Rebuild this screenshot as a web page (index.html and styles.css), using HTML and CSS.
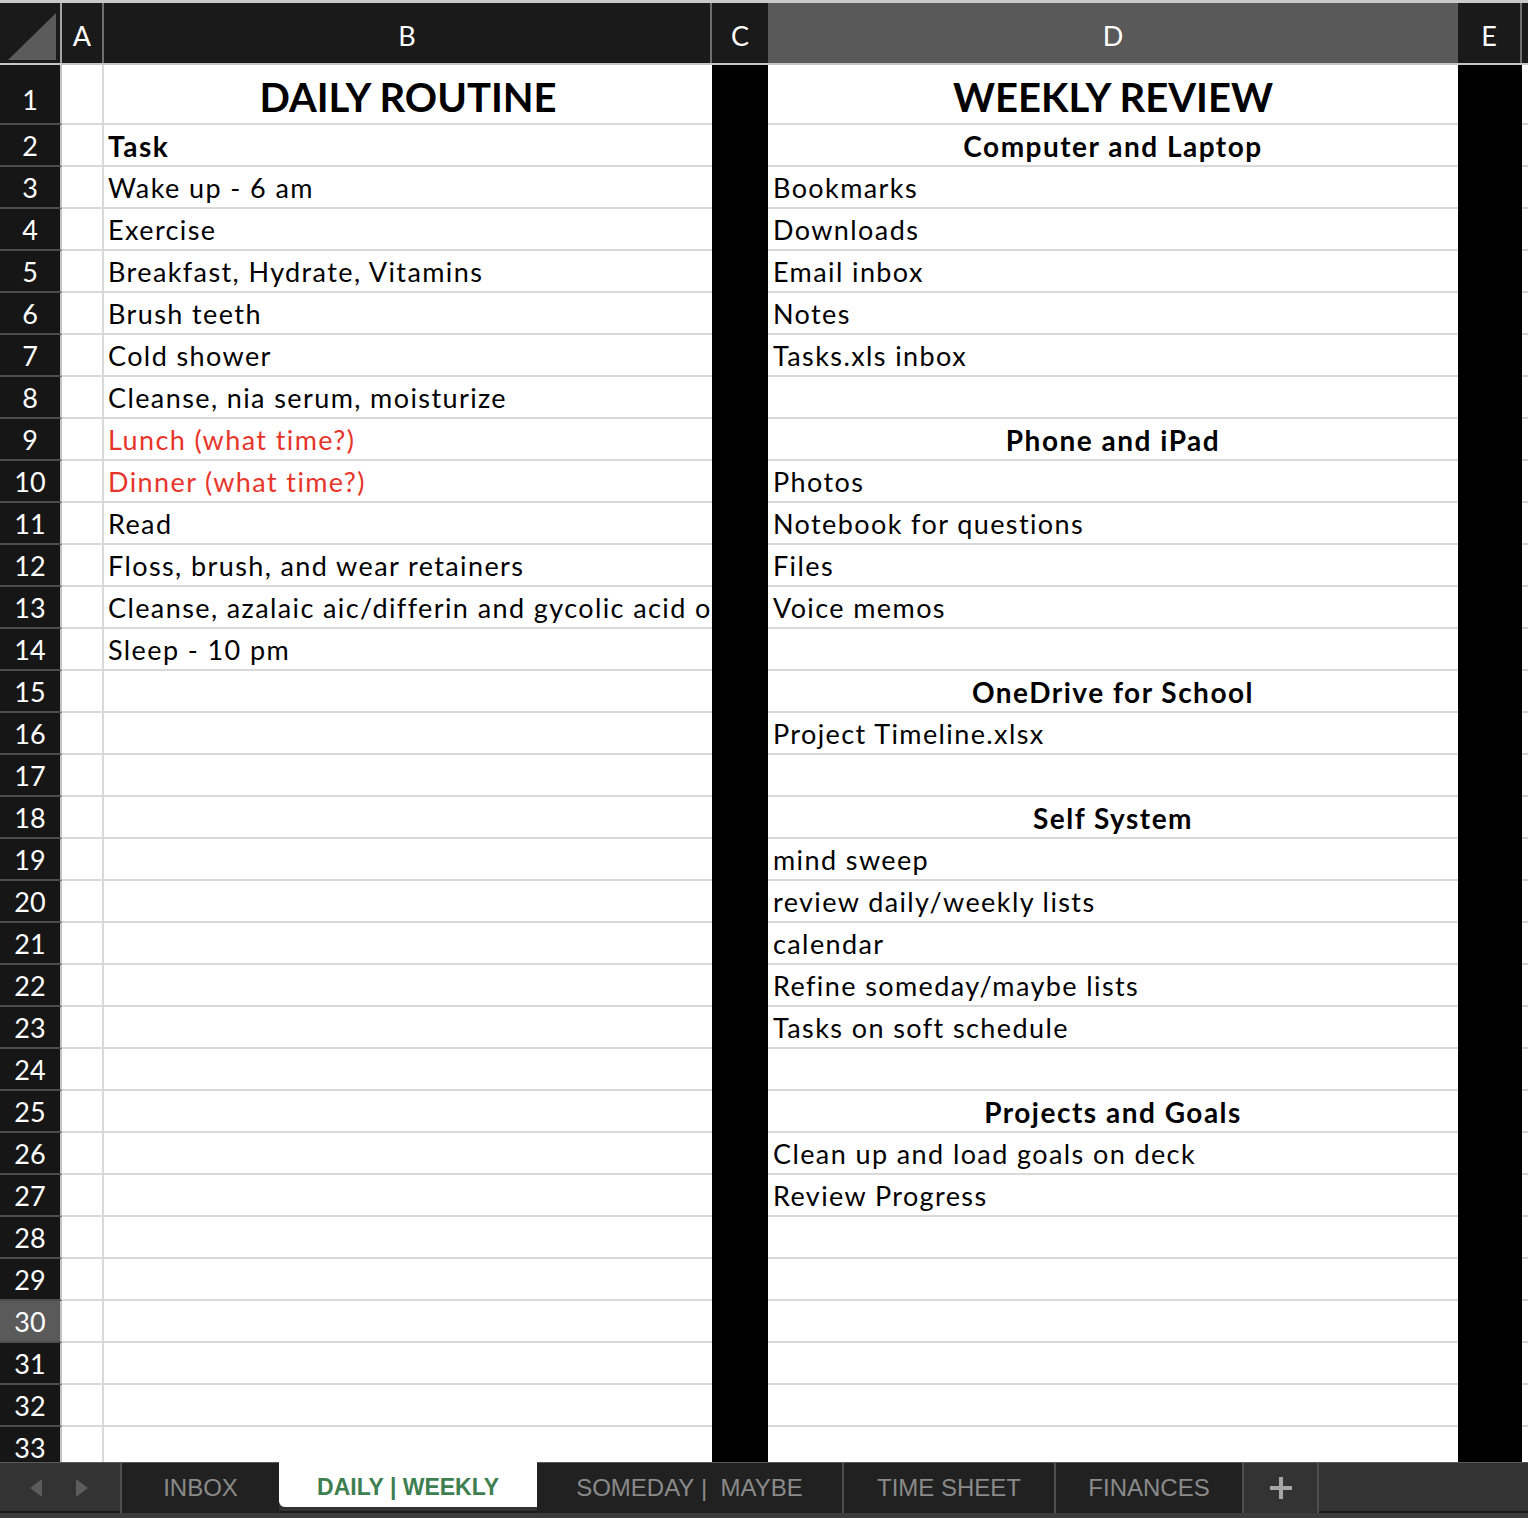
FILE: index.html
```html
<!DOCTYPE html>
<html>
<head>
<meta charset="utf-8">
<link rel="stylesheet" href="styles.css">
</head>
<body>
<div class="app">
  <div class="colhead">
    <div class="hc corner"><svg width="60" height="60" viewBox="0 0 60 60"><polygon points="8,57 56,10 56,57" fill="#5b5b5b"/></svg></div>
    <div class="hc ha">A</div>
    <div class="hc hb">B</div>
    <div class="hc hcc">C</div>
    <div class="hc hd">D</div>
    <div class="hc he">E</div>
    <div class="hc hz"></div>
  </div>
  <div class="grid">
    <div class="row first"><div class="rh">1</div><div class="c a"></div><div class="c b title">DAILY ROUTINE</div><div class="k"></div><div class="c d title">WEEKLY REVIEW</div><div class="k"></div><div class="c z"></div></div>
    <div class="row"><div class="rh">2</div><div class="c a"></div><div class="c b bold">Task</div><div class="k"></div><div class="c d sec">Computer and Laptop</div><div class="k"></div><div class="c z"></div></div>
    <div class="row"><div class="rh">3</div><div class="c a"></div><div class="c b">Wake up - 6 am</div><div class="k"></div><div class="c d">Bookmarks</div><div class="k"></div><div class="c z"></div></div>
    <div class="row"><div class="rh">4</div><div class="c a"></div><div class="c b">Exercise</div><div class="k"></div><div class="c d">Downloads</div><div class="k"></div><div class="c z"></div></div>
    <div class="row"><div class="rh">5</div><div class="c a"></div><div class="c b">Breakfast, Hydrate, Vitamins</div><div class="k"></div><div class="c d">Email inbox</div><div class="k"></div><div class="c z"></div></div>
    <div class="row"><div class="rh">6</div><div class="c a"></div><div class="c b">Brush teeth</div><div class="k"></div><div class="c d">Notes</div><div class="k"></div><div class="c z"></div></div>
    <div class="row"><div class="rh">7</div><div class="c a"></div><div class="c b">Cold shower</div><div class="k"></div><div class="c d">Tasks.xls inbox</div><div class="k"></div><div class="c z"></div></div>
    <div class="row"><div class="rh">8</div><div class="c a"></div><div class="c b">Cleanse, nia serum, moisturize</div><div class="k"></div><div class="c d"></div><div class="k"></div><div class="c z"></div></div>
    <div class="row"><div class="rh">9</div><div class="c a"></div><div class="c b red">Lunch (what time?)</div><div class="k"></div><div class="c d sec">Phone and iPad</div><div class="k"></div><div class="c z"></div></div>
    <div class="row"><div class="rh">10</div><div class="c a"></div><div class="c b red">Dinner (what time?)</div><div class="k"></div><div class="c d">Photos</div><div class="k"></div><div class="c z"></div></div>
    <div class="row"><div class="rh">11</div><div class="c a"></div><div class="c b">Read</div><div class="k"></div><div class="c d">Notebook for questions</div><div class="k"></div><div class="c z"></div></div>
    <div class="row"><div class="rh">12</div><div class="c a"></div><div class="c b">Floss, brush, and wear retainers</div><div class="k"></div><div class="c d">Files</div><div class="k"></div><div class="c z"></div></div>
    <div class="row"><div class="rh">13</div><div class="c a"></div><div class="c b">Cleanse, azalaic aic/differin and gycolic acid o</div><div class="k"></div><div class="c d">Voice memos</div><div class="k"></div><div class="c z"></div></div>
    <div class="row"><div class="rh">14</div><div class="c a"></div><div class="c b">Sleep - 10 pm</div><div class="k"></div><div class="c d"></div><div class="k"></div><div class="c z"></div></div>
    <div class="row"><div class="rh">15</div><div class="c a"></div><div class="c b"></div><div class="k"></div><div class="c d sec">OneDrive for School</div><div class="k"></div><div class="c z"></div></div>
    <div class="row"><div class="rh">16</div><div class="c a"></div><div class="c b"></div><div class="k"></div><div class="c d">Project Timeline.xlsx</div><div class="k"></div><div class="c z"></div></div>
    <div class="row"><div class="rh">17</div><div class="c a"></div><div class="c b"></div><div class="k"></div><div class="c d"></div><div class="k"></div><div class="c z"></div></div>
    <div class="row"><div class="rh">18</div><div class="c a"></div><div class="c b"></div><div class="k"></div><div class="c d sec">Self System</div><div class="k"></div><div class="c z"></div></div>
    <div class="row"><div class="rh">19</div><div class="c a"></div><div class="c b"></div><div class="k"></div><div class="c d">mind sweep</div><div class="k"></div><div class="c z"></div></div>
    <div class="row"><div class="rh">20</div><div class="c a"></div><div class="c b"></div><div class="k"></div><div class="c d">review daily/weekly lists</div><div class="k"></div><div class="c z"></div></div>
    <div class="row"><div class="rh">21</div><div class="c a"></div><div class="c b"></div><div class="k"></div><div class="c d">calendar</div><div class="k"></div><div class="c z"></div></div>
    <div class="row"><div class="rh">22</div><div class="c a"></div><div class="c b"></div><div class="k"></div><div class="c d">Refine someday/maybe lists</div><div class="k"></div><div class="c z"></div></div>
    <div class="row"><div class="rh">23</div><div class="c a"></div><div class="c b"></div><div class="k"></div><div class="c d">Tasks on soft schedule</div><div class="k"></div><div class="c z"></div></div>
    <div class="row"><div class="rh">24</div><div class="c a"></div><div class="c b"></div><div class="k"></div><div class="c d"></div><div class="k"></div><div class="c z"></div></div>
    <div class="row"><div class="rh">25</div><div class="c a"></div><div class="c b"></div><div class="k"></div><div class="c d sec">Projects and Goals</div><div class="k"></div><div class="c z"></div></div>
    <div class="row"><div class="rh">26</div><div class="c a"></div><div class="c b"></div><div class="k"></div><div class="c d">Clean up and load goals on deck</div><div class="k"></div><div class="c z"></div></div>
    <div class="row"><div class="rh">27</div><div class="c a"></div><div class="c b"></div><div class="k"></div><div class="c d">Review Progress</div><div class="k"></div><div class="c z"></div></div>
    <div class="row"><div class="rh">28</div><div class="c a"></div><div class="c b"></div><div class="k"></div><div class="c d"></div><div class="k"></div><div class="c z"></div></div>
    <div class="row"><div class="rh">29</div><div class="c a"></div><div class="c b"></div><div class="k"></div><div class="c d"></div><div class="k"></div><div class="c z"></div></div>
    <div class="row"><div class="rh sel">30</div><div class="c a"></div><div class="c b"></div><div class="k"></div><div class="c d"></div><div class="k"></div><div class="c z"></div></div>
    <div class="row"><div class="rh">31</div><div class="c a"></div><div class="c b"></div><div class="k"></div><div class="c d"></div><div class="k"></div><div class="c z"></div></div>
    <div class="row"><div class="rh">32</div><div class="c a"></div><div class="c b"></div><div class="k"></div><div class="c d"></div><div class="k"></div><div class="c z"></div></div>
    <div class="row"><div class="rh">33</div><div class="c a"></div><div class="c b"></div><div class="k"></div><div class="c d"></div><div class="k"></div><div class="c z"></div></div>
  </div>
  <div class="tabbar">
    <div class="nav">
      <svg width="14" height="18" viewBox="0 0 14 18"><polygon points="13,0 13,18 1,9" fill="#5c5c5c"/></svg>
      <svg width="14" height="18" viewBox="0 0 14 18"><polygon points="1,0 1,18 13,9" fill="#5c5c5c"/></svg>
    </div>
    <div class="tab t-inbox">INBOX</div>
    <div class="tab active t-daily">DAILY | WEEKLY</div>
    <div class="tab t-some">SOMEDAY&nbsp;|&nbsp; MAYBE</div>
    <div class="tab t-time">TIME SHEET</div>
    <div class="tab t-fin">FINANCES</div>
    <div class="tab plus"><svg width="22" height="22" viewBox="0 0 22 22"><rect x="9" y="0" width="4" height="22" fill="#a6a6a6"/><rect x="0" y="9" width="22" height="4" fill="#a6a6a6"/></svg></div>
    <div class="rest"></div>
  </div>
</div>
</body>
</html>
```

FILE: styles.css
```css
html, body {
  margin: 0;
  padding: 0;
  background: #ffffff;
}
.app {
  width: 1528px;
  height: 1518px;
  overflow: hidden;
  font-family: Lato, "Open Sans", sans-serif;
  display: flex;
  flex-direction: column;
}
.colhead {
  display: grid;
  grid-template-columns: 62px 42px 608px 56px 690px 64px 6px;
  height: 65px;
  box-sizing: border-box;
  border-top: 3px solid #c9c9c9;
  border-bottom: 2px solid #c6c6c6;
  background: #1a1a1a;
  flex: none;
}
.hc {
  color: #ffffff;
  font-size: 27px;
  display: flex;
  align-items: center;
  justify-content: center;
  box-sizing: border-box;
  background: #1a1a1a;
  padding-top: 4px;
}
.corner { border-right: 2px solid #a3a3a3; align-items: flex-end; justify-content: flex-start; padding-top: 0; }
.corner svg { display: block; }
.ha { border-right: 2px solid #6e6e6e; }
.hb { border-right: 2px solid #6e6e6e; }
.hd { background: #595959; }
.he { border-right: 2px solid #6e6e6e; }
.grid {
  height: 1397px;
  overflow: hidden;
  flex: none;
}
.row {
  display: grid;
  grid-template-columns: 62px 42px 608px 56px 690px 64px 6px;
  height: 42px;
}
.row.first { height: 60px; }
.rh {
  background: #161616;
  color: #ffffff;
  font-size: 27px;
  display: flex;
  align-items: center;
  justify-content: center;
  box-sizing: border-box;
  border-right: 2px solid #c3c3c3;
  border-bottom: 2px solid #4d4d4d;
  padding-top: 1px;
}
.first .rh { padding-top: 11px; }
.rh.sel { background: #5a5a5a; }
.c {
  box-sizing: border-box;
  border-bottom: 2px solid #d9d9d9;
  font-size: 27px;
  letter-spacing: 1.4px;
  color: #000000;
  display: flex;
  align-items: center;
  white-space: nowrap;
  overflow: hidden;
  padding-top: 1px;
}
.a { border-right: 2px solid #d9d9d9; }
.b { padding-left: 4px; }
.d { padding-left: 5px; }
.k { background: #000000; }
.title {
  justify-content: center;
  font-weight: 700;
  font-size: 40px;
  letter-spacing: 0;
  padding-left: 0;
  padding-top: 6px;
}
.bold { font-weight: 700; font-size: 28px; letter-spacing: 1.5px; }
.sec { font-weight: 700; font-size: 28px; letter-spacing: 1.5px; justify-content: center; padding-left: 0; }
.red { color: #e8352b; }
.tabbar {
  flex: none;
  height: 56px;
  display: flex;
  background: #333333;
  border-top: 1px solid #5a5a5a;
  box-sizing: border-box;
  border-bottom: 5px solid #3c3c3c;
  box-shadow: inset 0 -2px 0 #1a1a1a;
}
.nav {
  width: 120px;
  display: flex;
  align-items: center;
  justify-content: center;
  gap: 32px;
  padding-right: 2px;
  box-sizing: border-box;
}
.tab {
  display: flex;
  align-items: center;
  justify-content: center;
  box-sizing: border-box;
  font-family: "Liberation Sans", Arial, sans-serif;
  font-size: 24px;
  color: #8a8a8a;
  background: #212121;
  border-left: 2px solid #4e4e4e;
  padding-bottom: 0;
}
.t-inbox { width: 159px; }
.t-daily {
  width: 258px;
  background: #ffffff;
  color: #3d7f50;
  font-weight: 700;
  font-size: 23px;
  border-left: none;
  border-bottom-left-radius: 6px;
  margin-top: -1px;
  height: 45px;
  padding-top: 6px;
}
.t-some { width: 305px; border-left: none; }
.t-time { width: 212px; }
.t-fin { width: 188px; }
.plus {
  width: 77px;
  background: #333333;
  border-right: 2px solid #4e4e4e;
}
.plus svg { display: block; }
.rest { flex: 1; }
```
